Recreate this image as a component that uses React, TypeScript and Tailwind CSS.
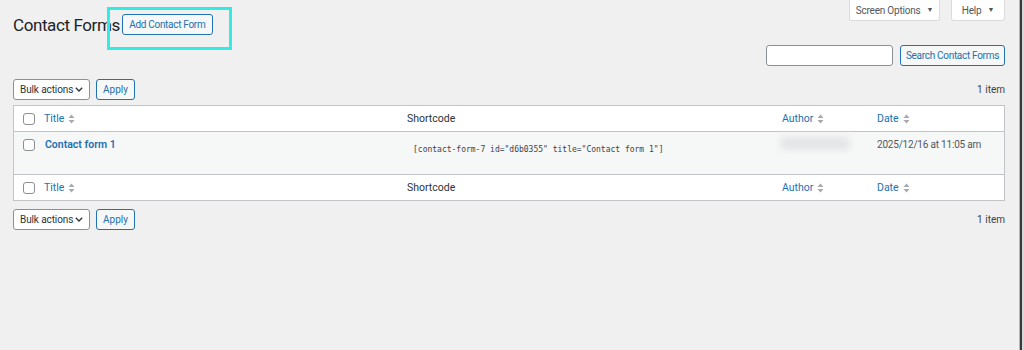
import React from 'react';

const font = "font-['Roboto','Noto_Sans',sans-serif]";

function SortIcon() {
  return (
    <svg width="7" height="10" viewBox="0 0 7 10" className="ml-[4px] inline-block">
      <path d="M0.5 4 L3.5 0.5 L6.5 4 Z" fill="#a7aaad" />
      <path d="M0.5 6 L3.5 9.5 L6.5 6 Z" fill="#a7aaad" />
    </svg>
  );
}

function Checkbox() {
  return <span className="inline-block w-[12px] h-[12px] bg-white border border-[#8c8f94] rounded-[3px]" />;
}

function BulkRow() {
  return (
    <div className="flex items-center justify-between h-[21px]">
      <div className="flex items-center gap-[6px]">
        <div className="flex items-center h-[21px] w-[77px] pl-[6px] pr-[6px] justify-between bg-white border border-[#8c8f94] rounded-[3px] text-[10px] tracking-[-0.1px] text-[#2c3338] whitespace-nowrap">
          <span>Bulk actions</span>
          <svg width="8" height="5" viewBox="0 0 8 5">
            <path d="M0.8 0.8 L4 4 L7.2 0.8" stroke="#2c3338" strokeWidth="1.3" fill="none" />
          </svg>
        </div>
        <div className="flex items-center justify-center h-[21px] w-[39px] border border-[#2271b1] rounded-[3px] bg-[#f6f7f7] text-[10px] text-[#2271b1]">Apply</div>
      </div>
      <span className="text-[10px] text-[#3c434a]">1 item</span>
    </div>
  );
}

function HeadRow() {
  return (
    <div className="flex items-center h-[25px] text-[10.5px]">
      <div className="w-[30px] pl-[9px] flex items-center"><Checkbox /></div>
      <div className="w-[363px] flex items-center text-[#2271b1]">Title<SortIcon /></div>
      <div className="w-[375px] text-[#2c3338]">Shortcode</div>
      <div className="w-[95px] flex items-center text-[#2271b1]">Author<SortIcon /></div>
      <div className="flex items-center text-[#2271b1]">Date<SortIcon /></div>
    </div>
  );
}

export default function App() {
  return (
    <div className={`min-h-[350px] w-[1024px] bg-[#f0f0f1] flex ${font}`}>
      <div className="flex-1 pl-[13px] pr-[14px]">
        <div className="flex justify-between items-start">
          <div className="flex items-center pt-[14px]">
            <h1 className="text-[17px] tracking-[-0.4px] leading-[20px] text-[#1d2327] mr-[2px]">Contact Forms</h1>
            <div className="relative">
              <div className="flex items-center justify-center h-[21px] w-[91px] border border-[#2271b1] rounded-[3px] bg-[#f6f7f7] text-[10px] tracking-[-0.3px] text-[#2271b1] whitespace-nowrap">Add Contact Form</div>
              <div className="absolute -left-[15px] -top-[7px] w-[125px] h-[43px] border-[3px] border-[#33ebe2]" />
            </div>
          </div>
          <div className="flex gap-[11px] text-[10px] tracking-[-0.2px] text-[#50575e]">
            <div className="flex items-center justify-center h-[21px] w-[91px] bg-white border border-[#dcdcde] border-t-0 rounded-b-[3px]">
              Screen Options<span className="ml-[6px] text-[7px]">▼</span>
            </div>
            <div className="flex items-center justify-center h-[21px] w-[54px] bg-white border border-[#dcdcde] border-t-0 rounded-b-[3px]">
              Help<span className="ml-[6px] text-[7px]">▼</span>
            </div>
          </div>
        </div>

        <div className="flex justify-end gap-[7px] mt-[10px]">
          <div className="w-[127px] h-[21px] bg-white border border-[#8c8f94] rounded-[3px]" />
          <div className="flex items-center justify-center h-[21px] w-[105px] border border-[#2271b1] rounded-[3px] bg-[#f6f7f7] text-[10px] tracking-[-0.3px] text-[#2271b1] whitespace-nowrap">Search Contact Forms</div>
        </div>

        <div className="mt-[13px]">
          <BulkRow />
        </div>

        <div className="mt-[5px] bg-white border border-[#c3c4c7]">
          <HeadRow />
          <div className="flex h-[44px] bg-[#f6f7f7] border-y border-[#c3c4c7] text-[10.5px]">
            <div className="w-[31px] pl-[9px] pt-[7px]"><Checkbox /></div>
            <div className="w-[368px] pt-[5px] font-semibold text-[#2271b1]">Contact form 1</div>
            <div className="w-[367px] pt-[12px] font-['DejaVu_Sans_Mono',monospace] text-[8px] text-[#3c434a]">[contact-form-7 id="d6b0355" title="Contact form 1"]</div>
            <div className="w-[97px] pt-[5px]">
              <div className="w-[70px] h-[13px] rounded-[6px] bg-[#e4e5e6] blur-[3px]" />
            </div>
            <div className="pt-[5px] text-[10px] tracking-[-0.2px] text-[#50575e]">2025/12/16 at 11:05 am</div>
          </div>
          <HeadRow />
        </div>

        <div className="mt-[8px]">
          <BulkRow />
        </div>
      </div>
      <div className="w-[1px] bg-[#b5b5b5]" />
      <div className="w-[2px] bg-[#3a3a3a]" />
      <div className="w-[2px] bg-[#d8d8d8]" />
    </div>
  );
}
